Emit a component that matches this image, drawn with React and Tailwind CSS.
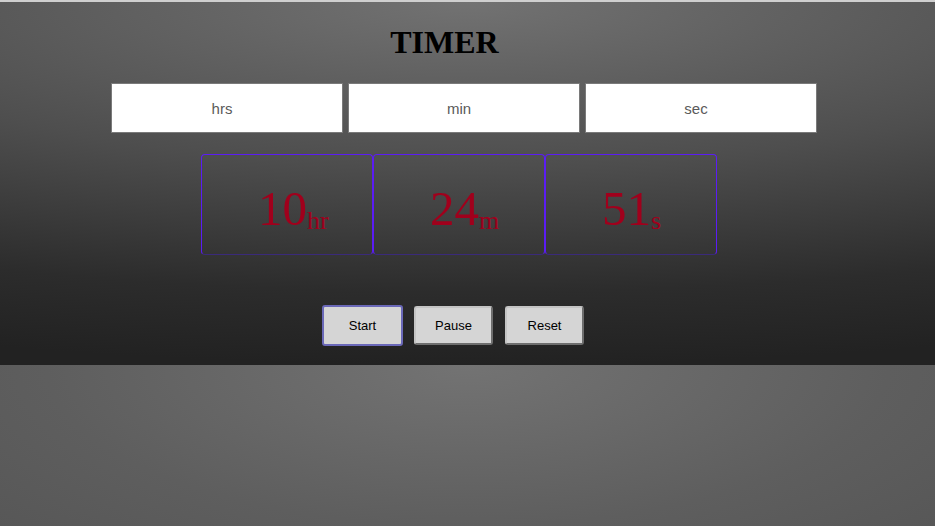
import React from 'react';

const fields = ['hrs', 'min', 'sec'];

const readout = [
    { value: '10', unit: 'hr' },
    { value: '24', unit: 'm' },
    { value: '51', unit: 's' },
];

export default function App() {
    return (
        <div className="min-h-[526px] flex flex-col bg-[#555] font-['Liberation_Sans',Arial,sans-serif]">
            <div className="h-[2px] bg-[#cfcfcf]" />

            {/* -- Timer panel -- */}
            <section className="h-[363px] flex flex-col bg-[radial-gradient(ellipse_160%_100%_at_50%_0%,#727272_0%,#4e4e4e_45%,#2c2c2c_80%,#222222_100%)]">
                <h1 className="mt-[22px] pr-[46px] text-center text-[32px] leading-[36px] font-bold text-black font-['Liberation_Serif','Times_New_Roman',serif]">
                    TIMER
                </h1>

                {/* inputs */}
                <div className="mt-[23px] ml-[111px] flex gap-[5px]">
                    {fields.map((f) => (
                        <input
                            key={f}
                            placeholder={f}
                            className="w-[232px] h-[50px] bg-white border border-[#7a7a7a] pr-[10px] text-center text-[15px] text-[#333] placeholder:text-[#5a5a5a] outline-none"
                        />
                    ))}
                </div>

                {/* readout */}
                <div className="mt-[21px] ml-[201px] flex">
                    {readout.map((r) => (
                        <div
                            key={r.unit}
                            className="w-[172px] h-[101px] flex items-center rounded-[4px] border border-[#5b1cf5] border-b-[#3a2a7a] pl-[56px] pt-[8px] font-['Liberation_Serif','Times_New_Roman',serif] text-[#a0001c]"
                        >
                            <span className="text-[49px] leading-none">
                                {r.value}
                                <sub className="relative bottom-[-4px] align-baseline text-[26px]">{r.unit}</sub>
                            </span>
                        </div>
                    ))}
                </div>

                {/* buttons */}
                <div className="mt-[50px] ml-[322px] flex items-center gap-[11px]">
                    <button className="w-[81px] h-[41px] rounded-[3px] bg-[#d5d5d5] border-2 border-[#6a68b8] text-[13px] text-black">
                        Start
                    </button>
                    <button className="w-[79px] h-[39px] rounded-[3px] bg-[#d5d5d5] border-2 border-[#c4c4c4] border-r-[#6e6e6e] border-b-[#6e6e6e] text-[13px] text-black">
                        Pause
                    </button>
                    <button className="ml-[1px] w-[79px] h-[39px] rounded-[3px] bg-[#d5d5d5] border-2 border-[#c4c4c4] border-r-[#6e6e6e] border-b-[#6e6e6e] text-[13px] text-black">
                        Reset
                    </button>
                </div>
            </section>

            <div className="flex-1 bg-[radial-gradient(ellipse_90%_200%_at_50%_0%,#737373_0%,#5e5e5e_50%,#505050_100%)]" />
        </div>
    );
}
